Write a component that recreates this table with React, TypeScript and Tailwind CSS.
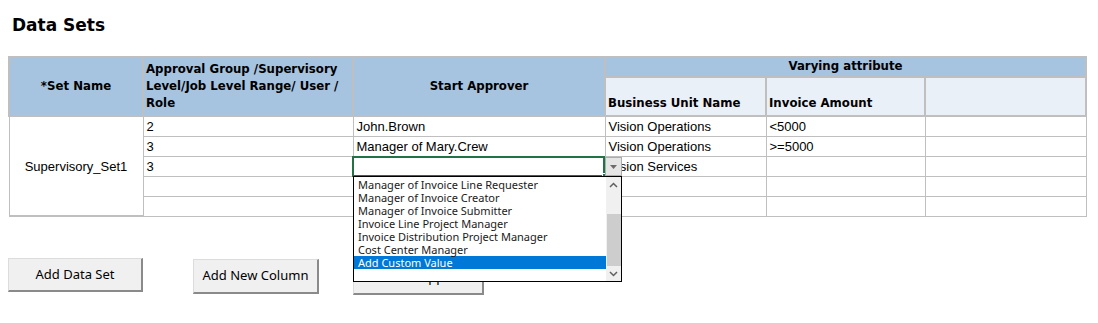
import React from "react";

const headFont = { fontFamily: '"DejaVu Sans", Verdana, sans-serif' };
const cellFont = { fontFamily: '"Liberation Sans", Arial, sans-serif' };
const uiFont = { fontFamily: '"Noto Sans", "Open Sans", sans-serif' };

type Row = {
  level: string;
  approver: string;
  unit: string;
  amount: string;
};

const rows: Row[] = [
  { level: "2", approver: "John.Brown", unit: "Vision Operations", amount: "<5000" },
  { level: "3", approver: "Manager of Mary.Crew", unit: "Vision Operations", amount: ">=5000" },
  { level: "3", approver: "", unit: "Vision Services", amount: "" },
  { level: "", approver: "", unit: "", amount: "" },
  { level: "", approver: "", unit: "", amount: "" },
];

const options = [
  "Manager of Invoice Line Requester",
  "Manager of Invoice Creator",
  "Manager of Invoice Submitter",
  "Invoice Line Project Manager",
  "Invoice Distribution Project Manager",
  "Cost Center Manager",
  "Add Custom Value",
];

function SheetButton({ label, className }: { label: string; className: string }) {
  return (
    <button
      className={`h-[34px] bg-[#f0f0f0] border border-[#dcdcdc] border-r-2 border-b-2 border-r-[#8a8a8a] border-b-[#8a8a8a] text-[13px] text-black ${className}`}
      style={uiFont}
    >
      {label}
    </button>
  );
}

// in-cell validation list, drawn over the grid
function Dropdown() {
  return (
    <div className="absolute inset-0 z-10 pointer-events-none">
      <div className="absolute left-[344px] top-[100px] w-[253px] h-[21px] border-2 border-[#217346]" />
      <div className="absolute left-[594px] top-[117px] w-[5px] h-[5px] bg-[#217346] border border-white" />
      <div className="absolute left-[597px] top-[101px] w-[17px] h-[19px] bg-[#e5e5e5] border border-[#acacac] flex items-center justify-center">
        <svg width="7" height="4" viewBox="0 0 7 4">
          <path d="M0 0h7L3.5 4z" fill="#6b6b6b" />
        </svg>
      </div>
      <div className="absolute left-[345px] top-[120px] w-[269px] h-[106px] bg-white border border-black flex">
        <div className="flex-1 pt-[1px]" style={uiFont}>
          {options.map((o, i) => (
            <div
              key={o}
              className={`h-[13px] leading-[13px] text-[11px] pl-[4px] ${
                i === options.length - 1 ? "bg-[#0078d7] text-white" : "text-[#1a1a1a]"
              }`}
            >
              {o}
            </div>
          ))}
        </div>
        <div className="w-[15px] bg-[#f0f0f0] flex flex-col items-center">
          <svg width="15" height="14" viewBox="0 0 15 14" className="mt-[1px]">
            <path d="M4 9l3.5-3.5L11 9" stroke="#606060" strokeWidth="1.5" fill="none" />
          </svg>
          <div className="mt-[22px] w-[14px] h-[52px] bg-[#cdcdcd]" />
          <svg width="15" height="14" viewBox="0 0 15 14" className="mt-[1px]">
            <path d="M4 5l3.5 3.5L11 5" stroke="#606060" strokeWidth="1.5" fill="none" />
          </svg>
        </div>
      </div>
    </div>
  );
}

export default function App() {
  const th = "border-2 border-[#bfbfbf] bg-[#a6c3df] text-[11.75px] font-bold text-black p-0";
  const td = "border border-[#bfbfbf] text-[13px] leading-[16px] text-black px-[3px] pt-[2px] pb-0 h-[20px] align-middle whitespace-nowrap overflow-hidden";

  return (
    <div className="w-[1098px] h-[323px] bg-white overflow-hidden">
      <h1 className="pl-[12px] pt-[14px] text-[17px] font-bold text-black leading-[22px]" style={headFont}>
        Data Sets
      </h1>

      <div className="relative z-10 ml-[8px] mt-[20px] w-[1077px]">
        <table className="table-fixed border-collapse w-[1077px]">
          <colgroup>
            <col className="w-[134px]" />
            <col className="w-[210px]" />
            <col className="w-[252px]" />
            <col className="w-[161px]" />
            <col className="w-[159px]" />
            <col className="w-[161px]" />
          </colgroup>
          <thead style={headFont}>
            <tr className="h-[20px]">
              <th rowSpan={2} className={`${th} text-center align-middle`}>
                *Set Name
              </th>
              <th rowSpan={2} className={`${th} text-left align-top pl-[2px] pt-[3px] leading-[17px]`}>
                Approval Group /Supervisory Level/Job Level Range/ User / Role
              </th>
              <th rowSpan={2} className={`${th} text-center align-middle`}>
                Start Approver
              </th>
              <th colSpan={3} className={`${th} text-center align-middle`}>
                Varying attribute
              </th>
            </tr>
            <tr className="h-[39px]">
              <th className={`${th} bg-[#e9f0f8] text-left align-bottom pl-[2px] pb-[2px]`}>Business Unit Name</th>
              <th className={`${th} bg-[#e9f0f8] text-left align-bottom pl-[2px] pb-[2px]`}>Invoice Amount</th>
              <th className={`${th} bg-[#e9f0f8]`} />
            </tr>
          </thead>
          <tbody style={cellFont}>
            {rows.map((r, i) => (
              <tr key={i} className="h-[20px]">
                {i === 0 && (
                  <td rowSpan={5} className="border border-[#bfbfbf] border-b-2 text-[13px] leading-[17px] text-center align-middle">
                    Supervisory_Set1
                  </td>
                )}
                <td className={td}>{r.level}</td>
                <td className={td}>{r.approver}</td>
                <td className={td}>{r.unit}</td>
                <td className={td}>{r.amount}</td>
                <td className={td} />
              </tr>
            ))}
          </tbody>
        </table>
        <Dropdown />
      </div>

      <div className="relative mt-[41px] flex items-start">
        <SheetButton label="Add Data Set" className="ml-[8px] w-[135px]" />
        <SheetButton label="Add New Column" className="ml-[50px] mt-[1px] w-[126px] h-[35px]" />
        <SheetButton label="Add Start Approver" className="ml-[34px] mt-[3px] w-[131px]" />
      </div>
    </div>
  );
}
